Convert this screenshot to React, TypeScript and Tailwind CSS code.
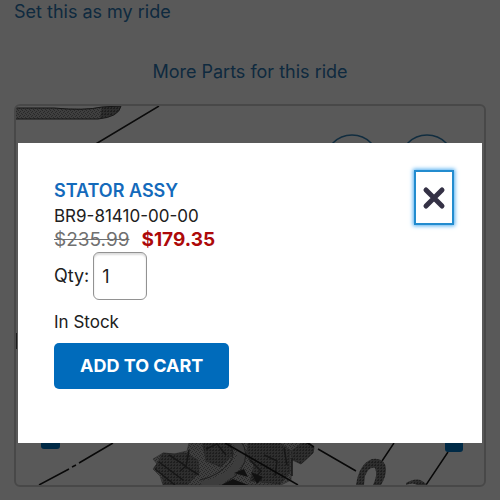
import { useState } from "react";

function PartsDiagram() {
  return (
    <svg viewBox="17 106 468 379" className="block w-full" aria-hidden="true">
      <defs>
        <pattern id="stipple" width="4" height="4" patternUnits="userSpaceOnUse">
          <rect width="4" height="4" fill="#b4b4b4" />
          <path d="M0 0h1v1H0zM2 1h1v1H2zM1 3h1v1H1zM3 2h1v1H3z" fill="#767676" />
        </pattern>
        <pattern id="stippleDark" width="3" height="3" patternUnits="userSpaceOnUse">
          <rect width="3" height="3" fill="#858585" />
          <path d="M0 0h2v1H0zM1 2h1v1H1z" fill="#565656" />
        </pattern>
      </defs>

      <path
        d="M17 108 H55 Q85 110 103 107 L122 106 Q120 117 99 119 H17 Z"
        fill="url(#stipple)"
      />
      <path d="M103 107 L122 106 Q119 116 101 118 Z" fill="url(#stippleDark)" />
      <path
        d="M17 108 H55 Q85 111 103 107 L122 106 Q120 117 99 119 H17"
        fill="none"
        stroke="#404040"
      />
      <path
        d="M160 106 L60 166 M17 333 V349"
        fill="none"
        stroke="#202020"
        strokeWidth="1.5"
      />
      <g fill="none" stroke="#3380b5" strokeWidth="1.5">
        <circle cx="353" cy="162" r="27" />
        <circle cx="428" cy="162" r="27" />
      </g>

      {/* engine block */}
      <g stroke="#606060" strokeWidth="0.5" strokeLinejoin="round">
        <path
          d="M164 453 L175 454 L188 451 L190 443 L303 440 L315 447 L314 453 L302 464 L293 460 L292 480 L282 485 H164 L161 476 L154 469 L158 464 L154 459 Z"
          fill="url(#stipple)"
        />
        <path
          d="M164 453 L176 454 L187 453 L199 460 L200 473 L188 485 H165 L163 474 L155 468 L159 462 Z"
          fill="url(#stippleDark)"
        />
        <path
          d="M203 440 L230 440 L234 454 L222 467 L207 461 Z"
          fill="url(#stippleDark)"
        />
        <path
          d="M250 440 L278 441 L291 450 L291 472 L281 484 L251 481 L255 465 L247 456 Z"
          fill="url(#stippleDark)"
        />
        <path
          d="M292 451 L308 440 L315 448 L314 453 L302 464 L293 459 Z"
          fill="url(#stippleDark)"
        />
      </g>
      <path
        d="M235 440 Q248 453 238 465 Q227 482 203 485"
        fill="none"
        stroke="#b0b0b0"
        strokeWidth="8"
      />
      <path
        d="M241 440 Q252 454 242 469 Q237 477 223 485 M229 441 Q238 453 231 462 Q220 476 201 480"
        fill="none"
        stroke="#585858"
        strokeWidth="1"
      />
      <path
        d="M160 462 L184 480 M156 469 L176 485 M170 455 L187 466 L181 471 M190 450 L187 467 L200 475 M207 449 L218 444 L227 455 M251 460 L262 471 L254 480 M265 455 L278 461 L276 476 M285 448 L288 465 M293 458 V476"
        fill="none"
        stroke="#404040"
        strokeWidth="1.5"
      />
      <path
        d="M223 485 L234 479 L249 485 Z M235 473 L245 469 L249 477 Z M252 472 L264 477 L258 484 Z"
        fill="#333333"
      />

      {/* leader lines */}
      <g fill="none" stroke="#181818" strokeWidth="1.5">
        <path d="M114 443 L80 463 M77 465 L73 467 M70 469 L40 485" />
        <path d="M226 443 L299 485" />
        <path d="M304 440 L315 447 M319 449 L357 471" />
        <path d="M395 443 L383 461 M449 452 L427 485" />
      </g>
      <path
        d="M357 485 Q360 464 373 459 Q386 457 387 469 Q387 477 382 485 H374 Q379 475 376 468 Q370 466 366 476 L365 485 Z"
        fill="url(#stippleDark)"
      />
      <path d="M407 483 Q420 475 428 485 H418 Q414 482 407 485 Z" fill="url(#stippleDark)" />
      <rect x="42" y="430" width="19" height="19" rx="3" fill="#0078c8" />
      <rect x="446" y="432" width="18" height="20" rx="3" fill="#0078c8" />
    </svg>
  );
}

function CloseIcon() {
  return (
    <svg viewBox="0 0 24 24" className="size-6" fill="none" aria-hidden="true">
      <path
        d="M4 4 L20 20 M20 4 L4 20"
        stroke="#343145"
        strokeWidth="5"
        strokeLinecap="round"
      />
    </svg>
  );
}

type CartDialogProps = {
  onClose: () => void;
};

function CartDialog({ onClose }: CartDialogProps) {
  const [quantity, setQuantity] = useState("1");

  return (
    <div className="fixed inset-0 bg-black/65 px-[18px] pt-[143px]">
      <div
        role="dialog"
        aria-modal="true"
        aria-labelledby="part-name"
        className="flex items-start justify-between bg-white pt-[35px] pr-7 pb-[54px] pl-9"
      >
        <form onSubmit={(event) => event.preventDefault()}>
          <h2 id="part-name" className="text-lg leading-[26px] font-semibold text-[#146abb]">
            STATOR ASSY
          </h2>
          <p className="text-[17px] leading-6">BR9-81410-00-00</p>
          <p className="flex gap-3 text-[19px] leading-6">
            <del className="text-[#707070]">$235.99</del>
            <strong className="font-bold text-[#ad0909]">$179.35</strong>
          </p>
          <div className="flex items-center gap-1">
            <label htmlFor="quantity" className="text-lg">
              Qty:
            </label>
            <input
              id="quantity"
              type="text"
              inputMode="numeric"
              value={quantity}
              onChange={(event) => setQuantity(event.target.value)}
              className="h-12 w-[54px] rounded-md border border-[#929292] bg-white px-2 text-lg shadow-[inset_0_2px_2px_#dddddd] outline-none"
            />
          </div>
          <p className="mt-2.5 text-[17px] leading-6">In Stock</p>
          <button
            type="submit"
            className="mt-[9px] h-[46px] rounded-[5px] bg-[#006bbb] px-[26px] text-lg font-bold text-white"
          >
            ADD TO CART
          </button>
        </form>
        <button
          type="button"
          aria-label="Close"
          onClick={onClose}
          className="-mt-2 flex h-[55px] w-10 items-center justify-center border-2 border-[#238ccf] bg-white shadow-[0_0_4px_1px_#51aef0] outline-none"
        >
          <CloseIcon />
        </button>
      </div>
    </div>
  );
}

export default function App() {
  const [open, setOpen] = useState(true);

  return (
    <div className="min-h-screen bg-white font-['Inter',sans-serif] text-[#202020]">
      <main className="flex flex-col px-3.5 pb-3">
        <a href="#my-ride" className="self-start text-lg leading-6 text-[#2c78b4]">
          Set this as my ride
        </a>
        <a href="#more-parts" className="mt-9 self-center text-lg leading-6 text-[#2c78b4]">
          More Parts for this ride
        </a>
        <div className="mt-5 overflow-hidden rounded-md border-2 border-[#cfcfcf]">
          <PartsDiagram />
        </div>
      </main>
      {open && <CartDialog onClose={() => setOpen(false)} />}
    </div>
  );
}
